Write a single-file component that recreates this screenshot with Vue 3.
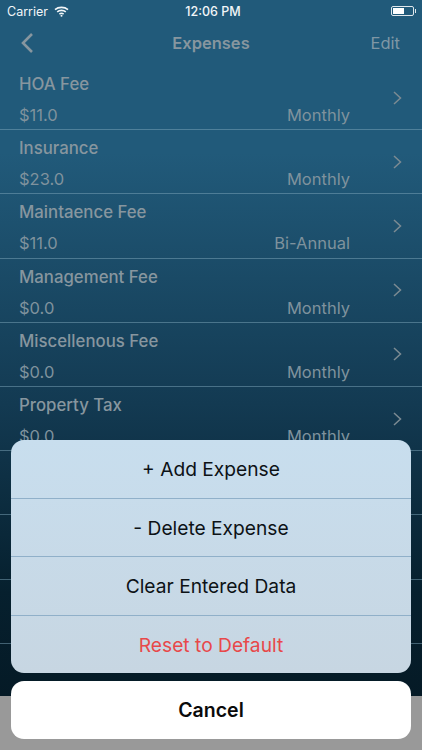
<script setup>
const rows = [
  { name: 'HOA Fee', value: '$11.0', period: 'Monthly' },
  { name: 'Insurance', value: '$23.0', period: 'Monthly' },
  { name: 'Maintaence Fee', value: '$11.0', period: 'Bi-Annual' },
  { name: 'Management Fee', value: '$0.0', period: 'Monthly' },
  { name: 'Miscellenous Fee', value: '$0.0', period: 'Monthly' },
  { name: 'Property Tax', value: '$0.0', period: 'Monthly' },
  { name: '', value: '', period: '' },
  { name: '', value: '', period: '' },
  { name: '', value: '', period: '' },
]
const actions = [
  { label: '+ Add Expense' },
  { label: '- Delete Expense' },
  { label: 'Clear Entered Data' },
  { label: 'Reset to Default', danger: true },
]
</script>

<template>
  <div class="screen">
    <div class="app">
      <div class="status">
        <div class="status-left">
          <span>Carrier</span>
          <svg width="15" height="11" viewBox="0 0 15 11" class="wifi">
            <path d="M1 3.6C4.6.6 10.4.6 14 3.6" />
            <path d="M3.2 5.9c2.4-2 6.2-2 8.6 0" />
            <path d="M5.4 8.1c1.2-1 3-1 4.2 0" />
            <circle cx="7.5" cy="9.8" r="1" />
          </svg>
        </div>
        <div class="status-time">12:06 PM</div>
        <div class="battery">
          <div class="battery-body"><div class="battery-fill"></div></div>
          <div class="battery-tip"></div>
        </div>
      </div>
      <div class="nav">
        <svg class="back" width="14" height="22" viewBox="0 0 14 22">
          <path d="M12 2 3 11l9 9" />
        </svg>
        <div class="nav-title">Expenses</div>
        <div class="nav-edit">Edit</div>
      </div>
      <div class="list">
        <div v-for="(row, i) in rows" :key="i" class="row">
          <div class="row-body">
            <div class="row-name">{{ row.name }}</div>
            <div class="row-line">
              <span>{{ row.value }}</span>
              <span>{{ row.period }}</span>
            </div>
          </div>
          <svg v-if="row.name" class="chev" width="9" height="14" viewBox="0 0 9 14">
            <path d="M1 1l6.5 6L1 13" />
          </svg>
        </div>
      </div>
    </div>
    <div class="sheet">
      <div class="group">
        <div v-for="a in actions" :key="a.label" class="action" :class="{ danger: a.danger }">{{ a.label }}</div>
      </div>
      <div class="cancel">Cancel</div>
    </div>
  </div>
</template>

<style scoped>
.screen {
  position: relative;
  width: 422px;
  height: 750px;
  overflow: hidden;
  background: #999999;
  font-family: Inter, "Liberation Sans", sans-serif;
}
.app {
  height: 696px;
  overflow: hidden;
  display: flex;
  flex-direction: column;
  background: linear-gradient(180deg, #215a7a 0%, #215a7a 22%, #133a52 58%, #06202e 85%, #051a26 100%);
}
.status {
  height: 22px;
  flex: none;
  position: relative;
  display: flex;
  align-items: center;
  justify-content: space-between;
  padding: 0 6px 0 7px;
  color: #f2f6f8;
  font-size: 12.5px;
}
.status-left {
  display: flex;
  align-items: center;
  gap: 6px;
}
.wifi path {
  fill: none;
  stroke: #f2f6f8;
  stroke-width: 1.6;
}
.wifi circle {
  fill: #f2f6f8;
}
.status-time {
  position: absolute;
  left: 4px;
  right: 0;
  text-align: center;
  font-weight: 500;
  font-size: 12.5px;
}
.battery {
  display: flex;
  align-items: center;
  gap: 1px;
}
.battery-body {
  width: 23px;
  height: 10px;
  box-sizing: border-box;
  border: 1px solid #dfe7ec;
  border-radius: 2px;
  padding: 1px;
}
.battery-fill {
  width: 11px;
  height: 100%;
  background: #fff;
}
.battery-tip {
  width: 1.5px;
  height: 4px;
  background: #dfe7ec;
}
.nav {
  height: 44px;
  box-sizing: border-box;
  padding: 0 22px 3px 20px;
  flex: none;
  position: relative;
  display: flex;
  align-items: center;
  justify-content: space-between;
  color: #87969f;
  font-size: 16.5px;
}
.back path {
  fill: none;
  stroke: #87969f;
  stroke-width: 2.6;
}
.nav-title {
  position: absolute;
  left: 0;
  right: 0;
  text-align: center;
  font-weight: 600;
}
.nav-edit {
  color: #7f97a5;
}
.list {
  display: flex;
  flex-direction: column;
}
.row {
  height: 64.2px;
  box-sizing: border-box;
  flex: none;
  border-bottom: 1px solid rgba(125, 165, 185, 0.5);
  display: flex;
  align-items: center;
  padding: 0 20px 0 19px;
  color: #87969f;
}
.row-body {
  flex: 1;
  padding-right: 43px;
}
.row-name {
  height: 22px;
  line-height: 22px;
  margin-top: 4px;
  margin-bottom: 9px;
  font-size: 16.8px;
  font-weight: 550;
}
.row-line {
  height: 22px;
  line-height: 22px;
  display: flex;
  justify-content: space-between;
  font-size: 16.5px;
  color: #7f929d;
}
.chev {
  flex: none;
}
.chev path {
  fill: none;
  stroke: #7c8b93;
  stroke-width: 1.5;
}
.sheet {
  position: absolute;
  left: 11px;
  right: 11px;
  top: 440px;
  display: flex;
  flex-direction: column;
  gap: 8px;
}
.group {
  height: 233px;
  border-radius: 13px;
  overflow: hidden;
  background: linear-gradient(180deg, #c8deee 0%, #c7d6e2 100%);
  display: flex;
  flex-direction: column;
}
.action {
  flex: 1;
  display: flex;
  align-items: center;
  justify-content: center;
  padding-top: 1px;
  font-size: 19.2px;
  color: #0d1216;
  border-bottom: 1px solid #90b0c9;
}
.action:last-child {
  border-bottom: none;
}
.action.danger {
  color: #e8484a;
}
.cancel {
  height: 58px;
  border-radius: 13px;
  background: #fff;
  display: flex;
  align-items: center;
  justify-content: center;
  font-size: 19.5px;
  font-weight: 600;
  color: #0a0a0a;
}
</style>
